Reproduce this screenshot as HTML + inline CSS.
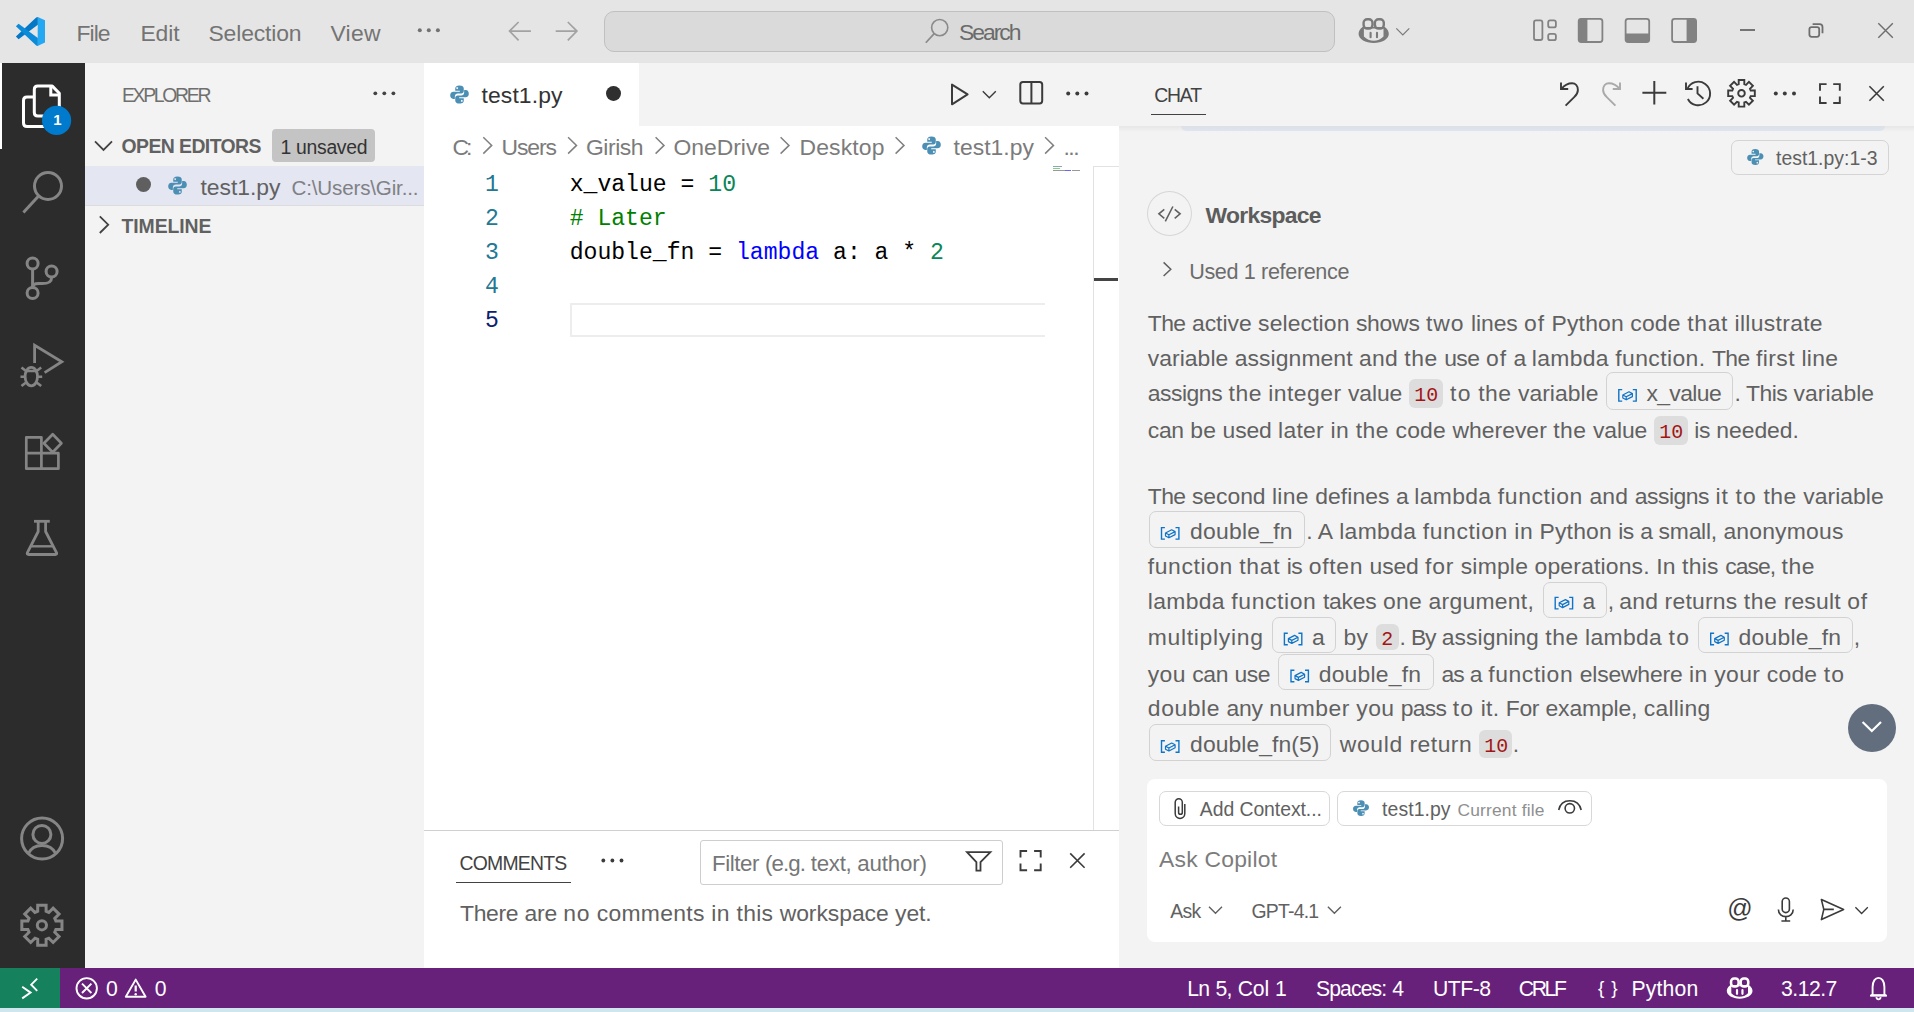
<!DOCTYPE html>
<html lang="en"><head><meta charset="utf-8"><title>test1.py - Visual Studio Code</title><style>
html,body{margin:0;padding:0;}
body{width:1914px;height:1012px;overflow:hidden;position:relative;background:#fff;font-family:"Liberation Sans",sans-serif;}
.g{position:absolute;left:0;top:0;width:0;height:0;display:block;margin:0;padding:0;}
.a{position:absolute;display:block;}
.t{white-space:pre;}
.s{font-family:"Liberation Sans",sans-serif;}
.m{font-family:"Liberation Mono",monospace;}
svg{overflow:visible;}
</style></head><body>
<div class="g" aria-label="Window backgrounds">
<div class="a " style="left:0px;top:0px;width:1914px;height:63px;background:#e5e5e5;"></div>
<div class="a " style="left:0px;top:63px;width:85px;height:905px;background:#2c2c2c;"></div>
<div class="a " style="left:85px;top:63px;width:339px;height:905px;background:#f3f3f3;"></div>
<div class="a " style="left:424px;top:63px;width:695px;height:63px;background:#f3f3f3;"></div>
<div class="a " style="left:424px;top:126px;width:695px;height:704px;background:#ffffff;"></div>
<div class="a " style="left:424px;top:830px;width:695px;height:138px;background:#ffffff;"></div>
<div class="a " style="left:424px;top:830px;width:695px;height:1px;background:#d0d0d0;"></div>
<div class="a " style="left:1119px;top:63px;width:795px;height:905px;background:#f3f3f3;"></div>
<div class="a " style="left:0px;top:968px;width:1914px;height:40px;background:#68217a;"></div>
<div class="a " style="left:0px;top:968px;width:60px;height:40px;background:#16825d;"></div>
<div class="a " style="left:0px;top:1008px;width:1914px;height:4px;background:#cfe6ee;"></div>
</div>
<header class="g" aria-label="Title bar">
<span class="a t s" style="left:76.50px;top:22px;font-size:22.9px;line-height:22.9px;color:#747474;letter-spacing:-0.964px;">File</span>
<span class="a t s" style="left:140.50px;top:22px;font-size:22.9px;line-height:22.9px;color:#747474;letter-spacing:-0.151px;">Edit</span>
<span class="a t s" style="left:208.50px;top:22px;font-size:22.9px;line-height:22.9px;color:#747474;letter-spacing:-0.146px;">Selection</span>
<span class="a t s" style="left:330.50px;top:22px;font-size:22.9px;line-height:22.9px;color:#747474;letter-spacing:0.266px;">View</span>
<div class="a " style="left:604px;top:11px;width:731px;height:40.7px;background:#dadada;border:1px solid #c0c0c0;border-radius:10px;box-sizing:border-box;"></div>
<span class="a t s" style="left:959.00px;top:21px;font-size:22.9px;line-height:22.9px;color:#6b6b6b;letter-spacing:-2.006px;">Search</span>
</header>
<nav class="g" aria-label="Activity bar">
<div class="a " style="left:0px;top:63px;width:2.2px;height:86px;background:#ffffff;"></div>
</nav>
<aside class="g" aria-label="Explorer side bar">
<span class="a t s" style="left:121.90px;top:86px;font-size:19.4px;line-height:19.4px;color:#6f6f6f;letter-spacing:-2.287px;">EXPLORER</span>
<span class="a t s" style="left:121.50px;top:137px;font-size:19.4px;line-height:19.4px;color:#616161;font-weight:700;letter-spacing:-0.562px;">OPEN EDITORS</span>
<div class="a " style="left:272px;top:129px;width:103px;height:33px;background:#c4c4c4;border-radius:4px;"></div>
<span class="a t s" style="left:280.50px;top:138px;font-size:19.4px;line-height:19.4px;color:#333333;letter-spacing:-0.311px;">1 unsaved</span>
<div class="a " style="left:85px;top:166px;width:339px;height:39px;background:#e4e6f1;"></div>
<div class="a " style="left:85px;top:205px;width:339px;height:1px;background:#dcdcdc;"></div>
<div class="a " style="left:135.5px;top:177.2px;width:15px;height:15px;background:#5f5f5f;border-radius:50%;"></div>
<span class="a t s" style="left:200.50px;top:176px;font-size:22.9px;line-height:22.9px;color:#616161;letter-spacing:-0.025px;">test1.py</span>
<span class="a t s" style="left:291.50px;top:178px;font-size:20.6px;line-height:20.6px;color:#808085;letter-spacing:-0.164px;">C:\Users\Gir...</span>
<span class="a t s" style="left:121.50px;top:217px;font-size:19.4px;line-height:19.4px;color:#616161;font-weight:700;letter-spacing:-0.071px;">TIMELINE</span>
</aside>
<main class="g" aria-label="Editor group">
<div class="a " style="left:424px;top:63px;width:215px;height:63px;background:#ffffff;"></div>
<span class="a t s" style="left:481.50px;top:84px;font-size:22.9px;line-height:22.9px;color:#333333;letter-spacing:0.118px;">test1.py</span>
<div class="a " style="left:606.4px;top:86.0px;width:14.8px;height:14.8px;background:#2f2f2f;border-radius:50%;"></div>
<span class="a t s" style="left:452.50px;top:136px;font-size:22.9px;line-height:22.9px;color:#7b7b7b;letter-spacing:-2.906px;">C:</span>
<span class="a t s" style="left:501.50px;top:136px;font-size:22.9px;line-height:22.9px;color:#7b7b7b;letter-spacing:-1.095px;">Users</span>
<span class="a t s" style="left:586.00px;top:136px;font-size:22.9px;line-height:22.9px;color:#7b7b7b;letter-spacing:-0.456px;">Girish</span>
<span class="a t s" style="left:673.50px;top:136px;font-size:22.9px;line-height:22.9px;color:#7b7b7b;letter-spacing:-0.012px;">OneDrive</span>
<span class="a t s" style="left:799.50px;top:136px;font-size:22.9px;line-height:22.9px;color:#7b7b7b;letter-spacing:0.169px;">Desktop</span>
<span class="a t s" style="left:953.50px;top:136px;font-size:22.9px;line-height:22.9px;color:#7b7b7b;letter-spacing:0.047px;">test1.py</span>
<span class="a t s" style="left:1063.50px;top:136px;font-size:22.9px;line-height:22.9px;color:#7b7b7b;letter-spacing:-1.547px;">...</span>
<span class="a t m" style="left:484.94px;top:174px;font-size:23.1px;line-height:23.1px;color:#237893">1</span>
<span class="a t m" style="left:484.94px;top:208px;font-size:23.1px;line-height:23.1px;color:#237893">2</span>
<span class="a t m" style="left:484.94px;top:242px;font-size:23.1px;line-height:23.1px;color:#237893">3</span>
<span class="a t m" style="left:484.94px;top:276px;font-size:23.1px;line-height:23.1px;color:#237893">4</span>
<span class="a t m" style="left:484.94px;top:310px;font-size:23.1px;line-height:23.1px;color:#0b216f">5</span>
<span class="a t m" style="left:569.70px;top:174px;font-size:23.1px;line-height:23.1px;color:#000">x_value = </span>
<span class="a t m" style="left:708.30px;top:174px;font-size:23.1px;line-height:23.1px;color:#098658">10</span>
<span class="a t m" style="left:569.70px;top:208px;font-size:23.1px;line-height:23.1px;color:#008000"># Later</span>
<span class="a t m" style="left:569.70px;top:242px;font-size:23.1px;line-height:23.1px;color:#000">double_fn = </span>
<span class="a t m" style="left:736.02px;top:242px;font-size:23.1px;line-height:23.1px;color:#0000ff">lambda</span>
<span class="a t m" style="left:833.04px;top:242px;font-size:23.1px;line-height:23.1px;color:#000">a: a * </span>
<span class="a t m" style="left:930.06px;top:242px;font-size:23.1px;line-height:23.1px;color:#098658">2</span>
<div class="a " style="left:569.7px;top:303px;width:475.3px;height:34.2px;border:2.7px solid #ededed;border-right:none;box-sizing:border-box;"></div>
<div class="a " style="left:1052.5px;top:166px;width:9px;height:1px;background:#8aa;"></div>
<div class="a " style="left:1052.5px;top:168px;width:7px;height:1px;background:#8c8;"></div>
<div class="a " style="left:1052.5px;top:170px;width:12px;height:1px;background:#999;"></div>
<div class="a " style="left:1065px;top:170px;width:6px;height:1px;background:#66f;"></div>
<div class="a " style="left:1072px;top:170px;width:8px;height:1px;background:#999;"></div>
<div class="a " style="left:1093px;top:166px;width:1px;height:664px;background:#e2e2e2;"></div>
<div class="a " style="left:1093px;top:166px;width:26px;height:1px;background:#e2e2e2;"></div>
<div class="a " style="left:1094px;top:278px;width:24px;height:3px;background:#444444;"></div>
</main>
<section class="g" aria-label="Panel: Comments">
<span class="a t s" style="left:459.50px;top:854px;font-size:19.4px;line-height:19.4px;color:#424242;letter-spacing:-0.773px;">COMMENTS</span>
<div class="a " style="left:456px;top:882px;width:115px;height:1px;background:#424242;"></div>
<div class="a " style="left:700px;top:840px;width:303px;height:45px;background:#ffffff;border:1px solid #cecece;border-radius:3px;box-sizing:border-box;"></div>
<span class="a t s" style="left:712.00px;top:853px;font-size:22.3px;line-height:22.3px;color:#767676;letter-spacing:-0.405px;">Filter </span>
<span class="a t s" style="left:765.05px;top:853px;font-size:22.3px;line-height:22.3px;color:#767676;letter-spacing:-0.946px;">(e.g. </span>
<span class="a t s" style="left:810.86px;top:853px;font-size:22.3px;line-height:22.3px;color:#767676;letter-spacing:-0.319px;">text, </span>
<span class="a t s" style="left:857.32px;top:853px;font-size:22.3px;line-height:22.3px;color:#767676;letter-spacing:-0.176px;">author)</span>
<span class="a t s" style="left:460.10px;top:902px;font-size:22.9px;line-height:22.9px;color:#616161;letter-spacing:-0.342px;">There </span>
<span class="a t s" style="left:524.61px;top:902px;font-size:22.9px;line-height:22.9px;color:#616161;letter-spacing:-0.267px;">are </span>
<span class="a t s" style="left:563.32px;top:902px;font-size:22.9px;line-height:22.9px;color:#616161;letter-spacing:0.732px;">no </span>
<span class="a t s" style="left:596.66px;top:902px;font-size:22.9px;line-height:22.9px;color:#616161;letter-spacing:0.317px;">comments </span>
<span class="a t s" style="left:711.21px;top:902px;font-size:22.9px;line-height:22.9px;color:#616161;letter-spacing:0.528px;">in </span>
<span class="a t s" style="left:736.50px;top:902px;font-size:22.9px;line-height:22.9px;color:#616161;letter-spacing:0.278px;">this </span>
<span class="a t s" style="left:779.65px;top:902px;font-size:22.9px;line-height:22.9px;color:#616161;letter-spacing:-0.042px;">workspace </span>
<span class="a t s" style="left:895.11px;top:902px;font-size:22.9px;line-height:22.9px;color:#616161;letter-spacing:-0.142px;">yet.</span>
</section>
<aside class="g" aria-label="Chat">
<span class="a t s" style="left:1154.30px;top:86px;font-size:19.4px;line-height:19.4px;color:#424242;letter-spacing:-1.220px;">CHAT</span>
<div class="a " style="left:1150.8px;top:113.6px;width:55.2px;height:1px;background:#424242;"></div>
<div class="a " style="left:1181px;top:126px;width:704px;height:4.8px;background:#dde6f0;border-radius:0 0 10px 10px;"></div>
<div class="a " style="left:1119px;top:126px;width:795px;height:6px;background:linear-gradient(#dcdcdc,rgba(243,243,243,0));opacity:.55;"></div>
<div class="a " style="left:1731.4px;top:140.2px;width:157.6px;height:34.6px;border:1px solid #d4d4d4;border-radius:7px;box-sizing:border-box;"></div>
<span class="a t s" style="left:1776.00px;top:149px;font-size:19.4px;line-height:19.4px;color:#616161;letter-spacing:0.016px;">test1.py:1-3</span>
<div class="a " style="left:1147px;top:190.9px;width:45px;height:45.5px;border:1px solid #d6d6d6;border-radius:50%;box-sizing:border-box;"></div>
<span class="a t s" style="left:1205.50px;top:204px;font-size:22.9px;line-height:22.9px;color:#5c5c5c;font-weight:700;letter-spacing:-0.715px;">Workspace</span>
<span class="a t s" style="left:1189.20px;top:261px;font-size:21.6px;line-height:21.6px;color:#6c6c6c;letter-spacing:-0.357px;">Used 1 reference</span>
<span class="a t s" style="left:1147.80px;top:312px;font-size:22.9px;line-height:22.9px;color:#616161;letter-spacing:-0.577px;">The </span>
<span class="a t s" style="left:1191.93px;top:312px;font-size:22.9px;line-height:22.9px;color:#616161;letter-spacing:-0.008px;">active </span>
<span class="a t s" style="left:1258.11px;top:312px;font-size:22.9px;line-height:22.9px;color:#616161;letter-spacing:0.116px;">selection </span>
<span class="a t s" style="left:1355.92px;top:312px;font-size:22.9px;line-height:22.9px;color:#616161;letter-spacing:-0.239px;">shows </span>
<span class="a t s" style="left:1426.03px;top:312px;font-size:22.9px;line-height:22.9px;color:#616161;letter-spacing:0.979px;">two </span>
<span class="a t s" style="left:1471.00px;top:312px;font-size:22.9px;line-height:22.9px;color:#616161;letter-spacing:-0.074px;">lines </span>
<span class="a t s" style="left:1524.12px;top:312px;font-size:22.9px;line-height:22.9px;color:#616161;letter-spacing:0.971px;">of </span>
<span class="a t s" style="left:1551.57px;top:312px;font-size:22.9px;line-height:22.9px;color:#616161;letter-spacing:0.169px;">Python </span>
<span class="a t s" style="left:1630.26px;top:312px;font-size:22.9px;line-height:22.9px;color:#616161;letter-spacing:0.220px;">code </span>
<span class="a t s" style="left:1687.19px;top:312px;font-size:22.9px;line-height:22.9px;color:#616161;letter-spacing:0.702px;">that </span>
<span class="a t s" style="left:1734.60px;top:312px;font-size:22.9px;line-height:22.9px;color:#616161;letter-spacing:0.304px;">illustrate</span>
<span class="a t s" style="left:1147.80px;top:347px;font-size:22.9px;line-height:22.9px;color:#616161;letter-spacing:0.041px;">variable </span>
<span class="a t s" style="left:1234.71px;top:347px;font-size:22.9px;line-height:22.9px;color:#616161;letter-spacing:0.087px;">assignment </span>
<span class="a t s" style="left:1359.06px;top:347px;font-size:22.9px;line-height:22.9px;color:#616161;letter-spacing:0.229px;">and </span>
<span class="a t s" style="left:1404.36px;top:347px;font-size:22.9px;line-height:22.9px;color:#616161;letter-spacing:0.521px;">the </span>
<span class="a t s" style="left:1444.16px;top:347px;font-size:22.9px;line-height:22.9px;color:#616161;letter-spacing:-0.514px;">use </span>
<span class="a t s" style="left:1485.95px;top:347px;font-size:22.9px;line-height:22.9px;color:#616161;letter-spacing:0.971px;">of </span>
<span class="a t s" style="left:1513.40px;top:347px;font-size:22.9px;line-height:22.9px;color:#616161;letter-spacing:-0.824px;">a </span>
<span class="a t s" style="left:1531.72px;top:347px;font-size:22.9px;line-height:22.9px;color:#616161;letter-spacing:0.345px;">lambda </span>
<span class="a t s" style="left:1615.29px;top:347px;font-size:22.9px;line-height:22.9px;color:#616161;letter-spacing:0.404px;">function. </span>
<span class="a t s" style="left:1711.88px;top:347px;font-size:22.9px;line-height:22.9px;color:#616161;letter-spacing:-0.577px;">The </span>
<span class="a t s" style="left:1756.01px;top:347px;font-size:22.9px;line-height:22.9px;color:#616161;letter-spacing:0.422px;">first </span>
<span class="a t s" style="left:1801.41px;top:347px;font-size:22.9px;line-height:22.9px;color:#616161;letter-spacing:0.286px;">line</span>
<span class="a t s" style="left:1147.80px;top:382px;font-size:22.9px;line-height:22.9px;color:#616161;letter-spacing:-0.472px;">assigns </span>
<span class="a t s" style="left:1228.53px;top:382px;font-size:22.9px;line-height:22.9px;color:#616161;letter-spacing:0.521px;">the </span>
<span class="a t s" style="left:1268.33px;top:382px;font-size:22.9px;line-height:22.9px;color:#616161;letter-spacing:0.456px;">integer </span>
<span class="a t s" style="left:1347.94px;top:382px;font-size:22.9px;line-height:22.9px;color:#616161;letter-spacing:-0.099px;">value</span>
<div class="a " style="left:1409px;top:379px;width:34px;height:28.80000000000001px;background:#dddddd;border-radius:6px;"></div>
<span class="a t m" style="left:1414.20px;top:386px;font-size:19.9px;line-height:19.9px;color:#a31515;letter-spacing:0.225px;">10</span>
<span class="a t s" style="left:1450.10px;top:382px;font-size:22.9px;line-height:22.9px;color:#616161;letter-spacing:1.276px;">to </span>
<span class="a t s" style="left:1478.16px;top:382px;font-size:22.9px;line-height:22.9px;color:#616161;letter-spacing:0.521px;">the </span>
<span class="a t s" style="left:1517.96px;top:382px;font-size:22.9px;line-height:22.9px;color:#616161;letter-spacing:0.041px;">variable</span>
<div class="a " style="left:1605.9px;top:372.4px;width:127.09999999999991px;height:37.50000000000006px;border:1px solid #d2d2d2;border-radius:7px;box-sizing:border-box;"></div>
<span class="a t s" style="left:1646.40px;top:382px;font-size:22.9px;line-height:22.9px;color:#616161;letter-spacing:-0.602px;">x_value</span>
<span class="a t s" style="left:1734.60px;top:382px;font-size:22.9px;line-height:22.9px;color:#616161;letter-spacing:-1.297px;">. </span>
<span class="a t s" style="left:1746.09px;top:382px;font-size:22.9px;line-height:22.9px;color:#616161;letter-spacing:-0.546px;">This </span>
<span class="a t s" style="left:1793.57px;top:382px;font-size:22.9px;line-height:22.9px;color:#616161;letter-spacing:0.041px;">variable</span>
<span class="a t s" style="left:1147.80px;top:419px;font-size:22.9px;line-height:22.9px;color:#616161;letter-spacing:-0.326px;">can </span>
<span class="a t s" style="left:1190.15px;top:419px;font-size:22.9px;line-height:22.9px;color:#616161;letter-spacing:0.264px;">be </span>
<span class="a t s" style="left:1222.56px;top:419px;font-size:22.9px;line-height:22.9px;color:#616161;letter-spacing:-0.125px;">used </span>
<span class="a t s" style="left:1278.11px;top:419px;font-size:22.9px;line-height:22.9px;color:#616161;letter-spacing:0.271px;">later </span>
<span class="a t s" style="left:1330.41px;top:419px;font-size:22.9px;line-height:22.9px;color:#616161;letter-spacing:0.528px;">in </span>
<span class="a t s" style="left:1355.71px;top:419px;font-size:22.9px;line-height:22.9px;color:#616161;letter-spacing:0.521px;">the </span>
<span class="a t s" style="left:1395.51px;top:419px;font-size:22.9px;line-height:22.9px;color:#616161;letter-spacing:0.220px;">code </span>
<span class="a t s" style="left:1452.44px;top:419px;font-size:22.9px;line-height:22.9px;color:#616161;letter-spacing:0.024px;">wherever </span>
<span class="a t s" style="left:1553.20px;top:419px;font-size:22.9px;line-height:22.9px;color:#616161;letter-spacing:0.521px;">the </span>
<span class="a t s" style="left:1593.01px;top:419px;font-size:22.9px;line-height:22.9px;color:#616161;letter-spacing:-0.099px;">value</span>
<div class="a " style="left:1654px;top:416px;width:33.799999999999955px;height:28.5px;background:#dddddd;border-radius:6px;"></div>
<span class="a t m" style="left:1659.20px;top:423px;font-size:19.9px;line-height:19.9px;color:#a31515;letter-spacing:0.225px;">10</span>
<span class="a t s" style="left:1694.30px;top:419px;font-size:22.9px;line-height:22.9px;color:#616161;letter-spacing:-0.473px;">is </span>
<span class="a t s" style="left:1716.30px;top:419px;font-size:22.9px;line-height:22.9px;color:#616161;letter-spacing:-0.031px;">needed.</span>
<span class="a t s" style="left:1147.80px;top:485px;font-size:22.9px;line-height:22.9px;color:#616161;letter-spacing:-0.577px;">The </span>
<span class="a t s" style="left:1191.93px;top:485px;font-size:22.9px;line-height:22.9px;color:#616161;letter-spacing:-0.027px;">second </span>
<span class="a t s" style="left:1272.01px;top:485px;font-size:22.9px;line-height:22.9px;color:#616161;letter-spacing:0.286px;">line </span>
<span class="a t s" style="left:1315.20px;top:485px;font-size:22.9px;line-height:22.9px;color:#616161;letter-spacing:0.077px;">defines </span>
<span class="a t s" style="left:1395.98px;top:485px;font-size:22.9px;line-height:22.9px;color:#616161;letter-spacing:-0.824px;">a </span>
<span class="a t s" style="left:1414.30px;top:485px;font-size:22.9px;line-height:22.9px;color:#616161;letter-spacing:0.345px;">lambda </span>
<span class="a t s" style="left:1497.86px;top:485px;font-size:22.9px;line-height:22.9px;color:#616161;letter-spacing:0.615px;">function </span>
<span class="a t s" style="left:1589.38px;top:485px;font-size:22.9px;line-height:22.9px;color:#616161;letter-spacing:0.229px;">and </span>
<span class="a t s" style="left:1634.68px;top:485px;font-size:22.9px;line-height:22.9px;color:#616161;letter-spacing:-0.472px;">assigns </span>
<span class="a t s" style="left:1715.41px;top:485px;font-size:22.9px;line-height:22.9px;color:#616161;letter-spacing:1.071px;">it </span>
<span class="a t s" style="left:1735.42px;top:485px;font-size:22.9px;line-height:22.9px;color:#616161;letter-spacing:1.276px;">to </span>
<span class="a t s" style="left:1763.48px;top:485px;font-size:22.9px;line-height:22.9px;color:#616161;letter-spacing:0.521px;">the </span>
<span class="a t s" style="left:1803.28px;top:485px;font-size:22.9px;line-height:22.9px;color:#616161;letter-spacing:0.041px;">variable</span>
<div class="a " style="left:1149.4px;top:511.0px;width:155.79999999999973px;height:36.80000000000007px;border:1px solid #d2d2d2;border-radius:7px;box-sizing:border-box;"></div>
<span class="a t s" style="left:1190.10px;top:520px;font-size:22.9px;line-height:22.9px;color:#616161;letter-spacing:0.227px;">double_fn</span>
<span class="a t s" style="left:1306.20px;top:520px;font-size:22.9px;line-height:22.9px;color:#616161;letter-spacing:-1.297px;">. </span>
<span class="a t s" style="left:1317.69px;top:520px;font-size:22.9px;line-height:22.9px;color:#616161;letter-spacing:-0.188px;">A </span>
<span class="a t s" style="left:1339.19px;top:520px;font-size:22.9px;line-height:22.9px;color:#616161;letter-spacing:0.345px;">lambda </span>
<span class="a t s" style="left:1422.76px;top:520px;font-size:22.9px;line-height:22.9px;color:#616161;letter-spacing:0.615px;">function </span>
<span class="a t s" style="left:1514.27px;top:520px;font-size:22.9px;line-height:22.9px;color:#616161;letter-spacing:0.528px;">in </span>
<span class="a t s" style="left:1539.57px;top:520px;font-size:22.9px;line-height:22.9px;color:#616161;letter-spacing:0.169px;">Python </span>
<span class="a t s" style="left:1618.26px;top:520px;font-size:22.9px;line-height:22.9px;color:#616161;letter-spacing:-0.473px;">is </span>
<span class="a t s" style="left:1640.26px;top:520px;font-size:22.9px;line-height:22.9px;color:#616161;letter-spacing:-0.824px;">a </span>
<span class="a t s" style="left:1658.58px;top:520px;font-size:22.9px;line-height:22.9px;color:#616161;letter-spacing:-0.233px;">small, </span>
<span class="a t s" style="left:1723.38px;top:520px;font-size:22.9px;line-height:22.9px;color:#616161;letter-spacing:0.202px;">anonymous</span>
<span class="a t s" style="left:1147.80px;top:555px;font-size:22.9px;line-height:22.9px;color:#616161;letter-spacing:0.615px;">function </span>
<span class="a t s" style="left:1239.32px;top:555px;font-size:22.9px;line-height:22.9px;color:#616161;letter-spacing:0.702px;">that </span>
<span class="a t s" style="left:1286.73px;top:555px;font-size:22.9px;line-height:22.9px;color:#616161;letter-spacing:-0.473px;">is </span>
<span class="a t s" style="left:1308.72px;top:555px;font-size:22.9px;line-height:22.9px;color:#616161;letter-spacing:0.701px;">often </span>
<span class="a t s" style="left:1369.56px;top:555px;font-size:22.9px;line-height:22.9px;color:#616161;letter-spacing:-0.125px;">used </span>
<span class="a t s" style="left:1425.11px;top:555px;font-size:22.9px;line-height:22.9px;color:#616161;letter-spacing:0.820px;">for </span>
<span class="a t s" style="left:1460.70px;top:555px;font-size:22.9px;line-height:22.9px;color:#616161;letter-spacing:0.206px;">simple </span>
<span class="a t s" style="left:1534.51px;top:555px;font-size:22.9px;line-height:22.9px;color:#616161;letter-spacing:0.184px;">operations. </span>
<span class="a t s" style="left:1656.21px;top:555px;font-size:22.9px;line-height:22.9px;color:#616161;letter-spacing:0.176px;">In </span>
<span class="a t s" style="left:1682.07px;top:555px;font-size:22.9px;line-height:22.9px;color:#616161;letter-spacing:0.278px;">this </span>
<span class="a t s" style="left:1725.22px;top:555px;font-size:22.9px;line-height:22.9px;color:#616161;letter-spacing:-0.952px;">case, </span>
<span class="a t s" style="left:1781.59px;top:555px;font-size:22.9px;line-height:22.9px;color:#616161;letter-spacing:0.521px;">the</span>
<span class="a t s" style="left:1147.80px;top:590px;font-size:22.9px;line-height:22.9px;color:#616161;letter-spacing:0.345px;">lambda </span>
<span class="a t s" style="left:1231.36px;top:590px;font-size:22.9px;line-height:22.9px;color:#616161;letter-spacing:0.615px;">function </span>
<span class="a t s" style="left:1322.88px;top:590px;font-size:22.9px;line-height:22.9px;color:#616161;letter-spacing:-0.217px;">takes </span>
<span class="a t s" style="left:1382.92px;top:590px;font-size:22.9px;line-height:22.9px;color:#616161;letter-spacing:0.323px;">one </span>
<span class="a t s" style="left:1428.51px;top:590px;font-size:22.9px;line-height:22.9px;color:#616161;letter-spacing:0.286px;">argument,</span>
<div class="a " style="left:1542.7px;top:582.1999999999999px;width:64.39999999999986px;height:35.90000000000009px;border:1px solid #d2d2d2;border-radius:7px;box-sizing:border-box;"></div>
<span class="a t s" style="left:1582.60px;top:590px;font-size:22.9px;line-height:22.9px;color:#616161;letter-spacing:-0.824px;">a</span>
<span class="a t s" style="left:1607.80px;top:590px;font-size:22.9px;line-height:22.9px;color:#616161;letter-spacing:-1.297px;">, </span>
<span class="a t s" style="left:1619.29px;top:590px;font-size:22.9px;line-height:22.9px;color:#616161;letter-spacing:0.229px;">and </span>
<span class="a t s" style="left:1664.59px;top:590px;font-size:22.9px;line-height:22.9px;color:#616161;letter-spacing:0.224px;">returns </span>
<span class="a t s" style="left:1743.82px;top:590px;font-size:22.9px;line-height:22.9px;color:#616161;letter-spacing:0.521px;">the </span>
<span class="a t s" style="left:1783.63px;top:590px;font-size:22.9px;line-height:22.9px;color:#616161;letter-spacing:0.189px;">result </span>
<span class="a t s" style="left:1847.16px;top:590px;font-size:22.9px;line-height:22.9px;color:#616161;letter-spacing:0.971px;">of</span>
<span class="a t s" style="left:1147.80px;top:626px;font-size:22.9px;line-height:22.9px;color:#616161;letter-spacing:0.695px;">multiplying</span>
<div class="a " style="left:1271.9px;top:616.9px;width:64.39999999999986px;height:35.80000000000007px;border:1px solid #d2d2d2;border-radius:7px;box-sizing:border-box;"></div>
<span class="a t s" style="left:1312.10px;top:626px;font-size:22.9px;line-height:22.9px;color:#616161;letter-spacing:-0.824px;">a</span>
<span class="a t s" style="left:1343.50px;top:626px;font-size:22.9px;line-height:22.9px;color:#616161;letter-spacing:0.332px;">by</span>
<div class="a " style="left:1376.3px;top:623.5px;width:22.700000000000045px;height:26.5px;background:#dddddd;border-radius:6px;"></div>
<span class="a t m" style="left:1381.20px;top:630px;font-size:19.9px;line-height:19.9px;color:#a31515;">2</span>
<span class="a t s" style="left:1399.40px;top:626px;font-size:22.9px;line-height:22.9px;color:#616161;letter-spacing:-1.297px;">. </span>
<span class="a t s" style="left:1410.89px;top:626px;font-size:22.9px;line-height:22.9px;color:#616161;letter-spacing:-1.109px;">By </span>
<span class="a t s" style="left:1441.80px;top:626px;font-size:22.9px;line-height:22.9px;color:#616161;letter-spacing:0.036px;">assigning </span>
<span class="a t s" style="left:1545.25px;top:626px;font-size:22.9px;line-height:22.9px;color:#616161;letter-spacing:0.521px;">the </span>
<span class="a t s" style="left:1585.06px;top:626px;font-size:22.9px;line-height:22.9px;color:#616161;letter-spacing:0.345px;">lambda </span>
<span class="a t s" style="left:1668.62px;top:626px;font-size:22.9px;line-height:22.9px;color:#616161;letter-spacing:1.276px;">to</span>
<div class="a " style="left:1697.7px;top:616.9px;width:155.19999999999982px;height:35.80000000000007px;border:1px solid #d2d2d2;border-radius:7px;box-sizing:border-box;"></div>
<span class="a t s" style="left:1738.60px;top:626px;font-size:22.9px;line-height:22.9px;color:#616161;letter-spacing:0.227px;">double_fn</span>
<span class="a t s" style="left:1853.80px;top:626px;font-size:22.9px;line-height:22.9px;color:#616161;letter-spacing:-1.297px;">,</span>
<span class="a t s" style="left:1147.80px;top:663px;font-size:22.9px;line-height:22.9px;color:#616161;letter-spacing:0.368px;">you </span>
<span class="a t s" style="left:1192.24px;top:663px;font-size:22.9px;line-height:22.9px;color:#616161;letter-spacing:-0.326px;">can </span>
<span class="a t s" style="left:1234.59px;top:663px;font-size:22.9px;line-height:22.9px;color:#616161;letter-spacing:-0.514px;">use</span>
<div class="a " style="left:1277.9px;top:654.0px;width:156.19999999999982px;height:35.80000000000007px;border:1px solid #d2d2d2;border-radius:7px;box-sizing:border-box;"></div>
<span class="a t s" style="left:1318.70px;top:663px;font-size:22.9px;line-height:22.9px;color:#616161;letter-spacing:0.227px;">double_fn</span>
<span class="a t s" style="left:1441.60px;top:663px;font-size:22.9px;line-height:22.9px;color:#616161;letter-spacing:-1.178px;">as </span>
<span class="a t s" style="left:1469.84px;top:663px;font-size:22.9px;line-height:22.9px;color:#616161;letter-spacing:-0.824px;">a </span>
<span class="a t s" style="left:1488.17px;top:663px;font-size:22.9px;line-height:22.9px;color:#616161;letter-spacing:0.615px;">function </span>
<span class="a t s" style="left:1579.68px;top:663px;font-size:22.9px;line-height:22.9px;color:#616161;letter-spacing:-0.169px;">elsewhere </span>
<span class="a t s" style="left:1688.91px;top:663px;font-size:22.9px;line-height:22.9px;color:#616161;letter-spacing:0.528px;">in </span>
<span class="a t s" style="left:1714.21px;top:663px;font-size:22.9px;line-height:22.9px;color:#616161;letter-spacing:0.409px;">your </span>
<span class="a t s" style="left:1766.79px;top:663px;font-size:22.9px;line-height:22.9px;color:#616161;letter-spacing:0.220px;">code </span>
<span class="a t s" style="left:1823.72px;top:663px;font-size:22.9px;line-height:22.9px;color:#616161;letter-spacing:1.276px;">to</span>
<span class="a t s" style="left:1147.80px;top:697px;font-size:22.9px;line-height:22.9px;color:#616161;letter-spacing:0.600px;">double </span>
<span class="a t s" style="left:1226.56px;top:697px;font-size:22.9px;line-height:22.9px;color:#616161;letter-spacing:-0.233px;">any </span>
<span class="a t s" style="left:1269.20px;top:697px;font-size:22.9px;line-height:22.9px;color:#616161;letter-spacing:0.517px;">number </span>
<span class="a t s" style="left:1356.34px;top:697px;font-size:22.9px;line-height:22.9px;color:#616161;letter-spacing:0.368px;">you </span>
<span class="a t s" style="left:1400.78px;top:697px;font-size:22.9px;line-height:22.9px;color:#616161;letter-spacing:-0.712px;">pass </span>
<span class="a t s" style="left:1452.70px;top:697px;font-size:22.9px;line-height:22.9px;color:#616161;letter-spacing:1.276px;">to </span>
<span class="a t s" style="left:1480.76px;top:697px;font-size:22.9px;line-height:22.9px;color:#616161;letter-spacing:0.287px;">it. </span>
<span class="a t s" style="left:1505.84px;top:697px;font-size:22.9px;line-height:22.9px;color:#616161;letter-spacing:-0.356px;">For </span>
<span class="a t s" style="left:1545.53px;top:697px;font-size:22.9px;line-height:22.9px;color:#616161;letter-spacing:-0.139px;">example, </span>
<span class="a t s" style="left:1643.72px;top:697px;font-size:22.9px;line-height:22.9px;color:#616161;letter-spacing:0.255px;">calling</span>
<div class="a " style="left:1149.4px;top:723.8px;width:181.89999999999986px;height:36.80000000000007px;border:1px solid #d2d2d2;border-radius:7px;box-sizing:border-box;"></div>
<span class="a t s" style="left:1190.10px;top:733px;font-size:22.9px;line-height:22.9px;color:#616161;letter-spacing:0.067px;">double_fn(5)</span>
<span class="a t s" style="left:1339.70px;top:733px;font-size:22.9px;line-height:22.9px;color:#616161;letter-spacing:0.692px;">would </span>
<span class="a t s" style="left:1409.39px;top:733px;font-size:22.9px;line-height:22.9px;color:#616161;letter-spacing:0.514px;">return</span>
<div class="a " style="left:1479px;top:730.4px;width:33px;height:28.0px;background:#dddddd;border-radius:6px;"></div>
<span class="a t m" style="left:1484.20px;top:737px;font-size:19.9px;line-height:19.9px;color:#a31515;letter-spacing:0.225px;">10</span>
<span class="a t s" style="left:1512.80px;top:733px;font-size:22.9px;line-height:22.9px;color:#616161;letter-spacing:-1.297px;">.</span>
<div class="a " style="left:1848px;top:704px;width:48px;height:48px;background:#626e7e;border-radius:50%;"></div>
<div class="a " style="left:1147px;top:779px;width:740px;height:163px;background:#ffffff;border-radius:8px;"></div>
<div class="a " style="left:1159px;top:791px;width:170.8px;height:34.9px;border:1px solid #d8d8d8;border-radius:7px;box-sizing:border-box;"></div>
<span class="a t s" style="left:1199.80px;top:800px;font-size:19.4px;line-height:19.4px;color:#616161;letter-spacing:-0.061px;">Add Context...</span>
<div class="a " style="left:1337px;top:791px;width:255px;height:34.9px;border:1px solid #d8d8d8;border-radius:7px;box-sizing:border-box;"></div>
<span class="a t s" style="left:1382.10px;top:800px;font-size:19.4px;line-height:19.4px;color:#616161;letter-spacing:0.071px;">test1.py</span>
<span class="a t s" style="left:1457.50px;top:802px;font-size:17.4px;line-height:17.4px;color:#8f8f8f;letter-spacing:0.176px;">Current file</span>
<span class="a t s" style="left:1159.10px;top:848px;font-size:22.9px;line-height:22.9px;color:#7c7c7c;letter-spacing:0.212px;">Ask Copilot</span>
<span class="a t s" style="left:1170.20px;top:902px;font-size:19.4px;line-height:19.4px;color:#616161;letter-spacing:-0.614px;">Ask</span>
<span class="a t s" style="left:1251.50px;top:902px;font-size:19.4px;line-height:19.4px;color:#616161;letter-spacing:-0.767px;">GPT-4.1</span>
</aside>
<footer class="g" aria-label="Status bar">
<span class="a t s" style="left:106.10px;top:978px;font-size:21.2px;line-height:21.2px;color:#ffffff;">0</span>
<span class="a t s" style="left:154.70px;top:978px;font-size:21.2px;line-height:21.2px;color:#ffffff;">0</span>
<span class="a t s" style="left:1433.00px;top:978px;font-size:21.2px;line-height:21.2px;color:#ffffff;letter-spacing:-0.483px;">UTF-8</span>
<span class="a t s" style="left:1518.80px;top:978px;font-size:21.2px;line-height:21.2px;color:#ffffff;letter-spacing:-2.409px;">CRLF</span>
<span class="a t s" style="left:1631.50px;top:978px;font-size:21.2px;line-height:21.2px;color:#ffffff;letter-spacing:0.166px;">Python</span>
<span class="a t s" style="left:1781.10px;top:978px;font-size:21.2px;line-height:21.2px;color:#ffffff;letter-spacing:-0.544px;">3.12.7</span>
<span class="a t s" style="left:1187.20px;top:978px;font-size:21.2px;line-height:21.2px;color:#ffffff;letter-spacing:-0.611px;">Ln </span>
<span class="a t s" style="left:1215.47px;top:978px;font-size:21.2px;line-height:21.2px;color:#ffffff;letter-spacing:-0.671px;">5, </span>
<span class="a t s" style="left:1237.72px;top:978px;font-size:21.2px;line-height:21.2px;color:#ffffff;letter-spacing:-0.181px;">Col </span>
<span class="a t s" style="left:1274.90px;top:978px;font-size:21.2px;line-height:21.2px;color:#ffffff;letter-spacing:-0.154px;">1</span>
<span class="a t s" style="left:1316.00px;top:978px;font-size:21.2px;line-height:21.2px;color:#ffffff;letter-spacing:-0.897px;">Spaces: </span>
<span class="a t s" style="left:1392.20px;top:978px;font-size:21.2px;line-height:21.2px;color:#ffffff;letter-spacing:-0.154px;">4</span>
<span class="a t s" style="left:1598.00px;top:978px;font-size:19px;line-height:19px;color:#ffffff;">{</span>
<span class="a t s" style="left:1611.20px;top:978px;font-size:19px;line-height:19px;color:#ffffff;">}</span>
</footer>
<div class="g" aria-label="Icons">
<svg class="a" style="left:0;top:0" width="1914" height="1012" viewBox="0 0 1914 1012"><polygon points="37.8,17 45,20.3 45,42.6 37.6,45.9" fill="#25a8f2"/><polygon points="37.8,17 37.8,24.8 18.6,39.2 15.9,36.4 36.2,17.4" fill="#0278c6"/><polygon points="15.9,26.3 18.6,23.8 37.8,37.9 37.8,45.9 36.2,45.4" fill="#0a8ad8"/><circle cx="419.8" cy="30.3" r="2" fill="#727272" stroke="none" stroke-width="0"/><circle cx="428.8" cy="30.3" r="2" fill="#727272" stroke="none" stroke-width="0"/><circle cx="437.9" cy="30.3" r="2" fill="#727272" stroke="none" stroke-width="0"/><path d="M530.9 31.1 H509.6 M518.6 22 L509.5 31.1 L518.6 40.4" fill="none" stroke="#a2a2a2" stroke-width="1.7" stroke-linecap="butt" stroke-linejoin="miter" /><path d="M555.7 31.1 H577 M567.8 22 L576.9 31.1 L567.8 40.4" fill="none" stroke="#a2a2a2" stroke-width="1.7" stroke-linecap="butt" stroke-linejoin="miter" /><circle cx="939.7" cy="27.6" r="8.1" fill="none" stroke="#8a8a8a" stroke-width="1.6"/><path d="M934.2 33.6 L925.8 42.8" fill="none" stroke="#8a8a8a" stroke-width="1.7" stroke-linecap="butt" stroke-linejoin="miter" /><g transform="translate(1358.6 17.9) scale(1.0)"><path fill="#7a7a7a" fill-rule="evenodd" d="M3.9 9.1 C0.9 11.6 0 13.6 0 16.1 C0 21.1 6.9 25.1 15.1 25.1 C23.3 25.1 30.2 21.1 30.2 16.1 C30.2 13.6 29.3 11.6 26.3 9.1 Z M5.3 10.5 V18.6 C7.8 21.4 11.7 22.8 15.1 22.8 C18.5 22.8 22.4 21.4 24.9 18.6 V10.5 Z"/><rect x="5" y="1.3" width="8.9" height="9.4" rx="3.6" fill="none" stroke="#7a7a7a" stroke-width="2.4"/><rect x="16.3" y="1.3" width="8.9" height="9.4" rx="3.6" fill="none" stroke="#7a7a7a" stroke-width="2.4"/><path d="M12 15 V19.3 M18.4 15 V19.3" fill="none" stroke="#7a7a7a" stroke-width="2.1" stroke-linecap="round"/></g><path d="M1396.3 28.4 L1402.8 34.9 L1409.3 28.4" fill="none" stroke="#7a7a7a" stroke-width="1.2" stroke-linecap="butt" stroke-linejoin="miter" /><rect x="1534" y="20.4" width="8.4" height="19.6" rx="2" fill="none" stroke="#828282" stroke-width="1.8"/><rect x="1548.2" y="20.4" width="7.7" height="7" rx="2" fill="none" stroke="#828282" stroke-width="1.8"/><rect x="1548.2" y="33.8" width="7.7" height="6.4" rx="2" fill="none" stroke="#828282" stroke-width="1.8"/><rect x="1578.7" y="18.8" width="23.7" height="23.2" rx="2.5" fill="none" stroke="#828282" stroke-width="1.8"/><path d="M1581 18.8 H1587.4 V42 H1581 Q1578.7 42 1578.7 39.7 V21.1 Q1578.7 18.8 1581 18.8Z" fill="#828282"/><rect x="1625.6" y="18.8" width="23.6" height="23.2" rx="2.5" fill="none" stroke="#828282" stroke-width="1.8"/><path d="M1625.6 33.4 H1649.2 V39.7 Q1649.2 42 1646.9 42 H1627.9 Q1625.6 42 1625.6 39.7Z" fill="#828282"/><rect x="1672.1" y="18.8" width="24" height="23.2" rx="2.5" fill="none" stroke="#828282" stroke-width="1.8"/><path d="M1686.6 18.8 H1693.8 Q1696.1 18.8 1696.1 21.1 V39.7 Q1696.1 42 1693.8 42 H1686.6Z" fill="#828282"/><path d="M1740 30 H1755" fill="none" stroke="#6e6e6e" stroke-width="1.9" stroke-linecap="butt" stroke-linejoin="miter" /><rect x="1809.4" y="27.1" width="9.8" height="9.7" rx="2.2" fill="none" stroke="#6e6e6e" stroke-width="1.8"/><path d="M1812.6 24.2 H1819.6 Q1822.5 24.2 1822.5 27.1 V33.2" fill="none" stroke="#6e6e6e" stroke-width="1.8" stroke-linecap="butt" stroke-linejoin="miter" /><path d="M1878.3 23.3 L1892.8 37.7 M1892.8 23.3 L1878.3 37.7" fill="none" stroke="#6e6e6e" stroke-width="1.4" stroke-linecap="butt" stroke-linejoin="miter" /><path d="M52.3 86.1 H37.8 Q34.3 86.1 34.3 89.6 V112.6 Q34.3 116.1 37.8 116.1 H55.8 Q59.3 116.1 59.3 112.6 V93.3 Z" fill="none" stroke="#ffffff" stroke-width="3" stroke-linecap="butt" stroke-linejoin="round" /><path d="M50.8 86.5 V94.9 H59" fill="none" stroke="#ffffff" stroke-width="3" stroke-linecap="butt" stroke-linejoin="miter" /><path d="M34 97.1 H27 Q23.5 97.1 23.5 100.6 V123 Q23.5 126.5 27 126.5 H46" fill="none" stroke="#ffffff" stroke-width="3" stroke-linecap="butt" stroke-linejoin="miter" /><circle cx="56.6" cy="120.4" r="14.6" fill="#007acc" stroke="none" stroke-width="0"/><circle cx="48" cy="186" r="13.5" fill="none" stroke="#858585" stroke-width="3"/><path d="M38.6 196 L23.4 212.6" fill="none" stroke="#858585" stroke-width="3" stroke-linecap="butt" stroke-linejoin="miter" /><circle cx="32.6" cy="263.5" r="5.5" fill="none" stroke="#858585" stroke-width="3"/><circle cx="51.6" cy="271.5" r="5.5" fill="none" stroke="#858585" stroke-width="3"/><circle cx="32.6" cy="293" r="5.5" fill="none" stroke="#858585" stroke-width="3"/><path d="M32.6 269.5 V287" fill="none" stroke="#858585" stroke-width="3" stroke-linecap="butt" stroke-linejoin="miter" /><path d="M51.6 277.5 C51.6 283.5 46 283.6 42 283.6 H38.5 C35 283.6 32.8 285 32.8 287.3" fill="none" stroke="#858585" stroke-width="3" stroke-linecap="butt" stroke-linejoin="miter" /><path d="M34.6 363 V345.2 L61.8 361.8 L44.6 372.6" fill="none" stroke="#858585" stroke-width="2.8" stroke-linecap="butt" stroke-linejoin="miter" /><ellipse cx="31.3" cy="376.6" rx="6.2" ry="9.2" fill="none" stroke="#858585" stroke-width="2.8"/><path d="M20.5 376.8 H25 M37.6 376.8 H42.2 M21.5 367.5 L26 371 M41.2 367.5 L36.6 371 M21.5 386 L26 382.4 M41.2 386 L36.6 382.4 M26 371 H36.6" fill="none" stroke="#858585" stroke-width="2.6" stroke-linecap="butt" stroke-linejoin="miter" /><path d="M26.3 437.3 H41.4 V453.2 H26.3 Z M26.3 453.2 V468.7 H41.4 V453.2 M41.4 468.7 H58.4 V453.2 H41.4" fill="none" stroke="#858585" stroke-width="2.7" stroke-linecap="butt" stroke-linejoin="round" /><path d="M52.7 434.3 L61.4 443.3 L52.7 452.2 L43.9 443.3 Z" fill="none" stroke="#858585" stroke-width="2.7" stroke-linecap="butt" stroke-linejoin="round" /><path d="M34 521.3 H49.8" fill="none" stroke="#858585" stroke-width="2.8" stroke-linecap="butt" stroke-linejoin="miter" /><path d="M38.2 521.3 V531.5 L27.4 552.6 Q26.6 554.5 28.6 554.5 H55.3 Q57.3 554.5 56.5 552.6 L45.6 531.5 V521.3" fill="none" stroke="#858585" stroke-width="2.8" stroke-linecap="butt" stroke-linejoin="round" /><path d="M31.3 546.3 H52.6" fill="none" stroke="#858585" stroke-width="2.4" stroke-linecap="butt" stroke-linejoin="miter" /><circle cx="42.1" cy="838.5" r="20.5" fill="none" stroke="#858585" stroke-width="3"/><circle cx="41.9" cy="834.4" r="9" fill="none" stroke="#858585" stroke-width="3"/><path d="M28.3 853.6 C31 847.8 36 845.4 42 845.4 C48 845.4 53 847.8 55.8 853.6" fill="none" stroke="#858585" stroke-width="3" stroke-linecap="butt" stroke-linejoin="miter" /><path d="M55.88 921.10 L61.97 921.10 L61.97 929.50 L55.88 929.50 L54.76 932.22 L59.06 936.52 L53.12 942.46 L48.82 938.16 L46.10 939.28 L46.10 945.37 L37.70 945.37 L37.70 939.28 L34.98 938.16 L30.68 942.46 L24.74 936.52 L29.04 932.22 L27.92 929.50 L21.83 929.50 L21.83 921.10 L27.92 921.10 L29.04 918.38 L24.74 914.08 L30.68 908.14 L34.98 912.44 L37.70 911.32 L37.70 905.23 L46.10 905.23 L46.10 911.32 L48.82 912.44 L53.12 908.14 L59.06 914.08 L54.76 918.38Z" fill="none" stroke="#858585" stroke-width="3" stroke-linecap="butt" stroke-linejoin="miter" /><circle cx="41.9" cy="925.3" r="4.6" fill="none" stroke="#858585" stroke-width="3"/><path d="M22.2 986.8 L30.6 992.6 L22.2 998.4" fill="none" stroke="#ffffff" stroke-width="1.9" stroke-linecap="butt" stroke-linejoin="miter" /><path d="M37.2 978.6 L31.2 984.7 L37.2 990.8" fill="none" stroke="#ffffff" stroke-width="1.9" stroke-linecap="butt" stroke-linejoin="miter" /><circle cx="86.7" cy="988.3" r="10.2" fill="none" stroke="#ffffff" stroke-width="1.9"/><path d="M82 983.6 L91.4 993 M91.4 983.6 L82 993" fill="none" stroke="#ffffff" stroke-width="1.9" stroke-linecap="butt" stroke-linejoin="miter" /><path d="M135.7 979.6 L145.6 996.8 H125.8 Z" fill="none" stroke="#ffffff" stroke-width="1.9" stroke-linecap="butt" stroke-linejoin="round" /><path d="M135.7 985.5 V991.5" fill="none" stroke="#ffffff" stroke-width="2.2" stroke-linecap="butt" stroke-linejoin="miter" /><circle cx="135.7" cy="994.2" r="1.2" fill="#ffffff" stroke="none" stroke-width="0"/><g transform="translate(1726.8 977.4) scale(0.851)"><path fill="#ffffff" fill-rule="evenodd" d="M3.9 9.1 C0.9 11.6 0 13.6 0 16.1 C0 21.1 6.9 25.1 15.1 25.1 C23.3 25.1 30.2 21.1 30.2 16.1 C30.2 13.6 29.3 11.6 26.3 9.1 Z M5.3 10.5 V18.6 C7.8 21.4 11.7 22.8 15.1 22.8 C18.5 22.8 22.4 21.4 24.9 18.6 V10.5 Z"/><rect x="5" y="1.3" width="8.9" height="9.4" rx="3.6" fill="none" stroke="#ffffff" stroke-width="3.0"/><rect x="16.3" y="1.3" width="8.9" height="9.4" rx="3.6" fill="none" stroke="#ffffff" stroke-width="3.0"/><path d="M12 15 V19.3 M18.4 15 V19.3" fill="none" stroke="#ffffff" stroke-width="2.6" stroke-linecap="round"/></g><path d="M1871 995.2 H1886 M1872.6 995 V987 C1872.6 974.8 1884.4 974.8 1884.4 987 V995" fill="none" stroke="#ffffff" stroke-width="1.9" stroke-linecap="butt" stroke-linejoin="round" /><path d="M1870 995.6 H1887" fill="none" stroke="#ffffff" stroke-width="1.9" stroke-linecap="butt" stroke-linejoin="miter" /><path d="M1876.3 997.2 C1876.8 1000.2 1880.2 1000.2 1880.7 997.2" fill="none" stroke="#ffffff" stroke-width="1.8" stroke-linecap="butt" stroke-linejoin="miter" /><circle cx="375.3" cy="93.3" r="1.9" fill="#424242" stroke="none" stroke-width="0"/><circle cx="384.3" cy="93.3" r="1.9" fill="#424242" stroke="none" stroke-width="0"/><circle cx="393.4" cy="93.3" r="1.9" fill="#424242" stroke="none" stroke-width="0"/><path d="M95 141.4 L103.5 150 L112 141.4" fill="none" stroke="#424242" stroke-width="1.8" stroke-linecap="butt" stroke-linejoin="miter" /><path d="M99.8 216.4 L108.2 224.7 L99.8 233" fill="none" stroke="#424242" stroke-width="1.8" stroke-linecap="butt" stroke-linejoin="miter" /><g transform="translate(167.8 175.8) scale(0.97)" fill="#4b8fb5" fill-rule="evenodd"><path d="M10 0.6 C6.6 0.6 5.6 2 5.6 3.8 V6.2 H10.3 V7.2 H3.8 C1.6 7.2 0.4 8.8 0.4 10.9 C0.4 13 1.6 14.6 3.6 14.6 H5.2 V12 C5.2 10.2 6.5 8.9 8.3 8.9 H11.9 C13.4 8.9 14.4 7.9 14.4 6.4 V3.8 C14.4 1.8 12.9 0.6 10 0.6 Z M7.6 2.4 A0.95 0.95 0 1 1 7.59 2.4 Z"/><path transform="rotate(180 10 10)" d="M10 0.6 C6.6 0.6 5.6 2 5.6 3.8 V6.2 H10.3 V7.2 H3.8 C1.6 7.2 0.4 8.8 0.4 10.9 C0.4 13 1.6 14.6 3.6 14.6 H5.2 V12 C5.2 10.2 6.5 8.9 8.3 8.9 H11.9 C13.4 8.9 14.4 7.9 14.4 6.4 V3.8 C14.4 1.8 12.9 0.6 10 0.6 Z M7.6 2.4 A0.95 0.95 0 1 1 7.59 2.4 Z"/></g><g transform="translate(449.8 84.8) scale(0.97)" fill="#4b8fb5" fill-rule="evenodd"><path d="M10 0.6 C6.6 0.6 5.6 2 5.6 3.8 V6.2 H10.3 V7.2 H3.8 C1.6 7.2 0.4 8.8 0.4 10.9 C0.4 13 1.6 14.6 3.6 14.6 H5.2 V12 C5.2 10.2 6.5 8.9 8.3 8.9 H11.9 C13.4 8.9 14.4 7.9 14.4 6.4 V3.8 C14.4 1.8 12.9 0.6 10 0.6 Z M7.6 2.4 A0.95 0.95 0 1 1 7.59 2.4 Z"/><path transform="rotate(180 10 10)" d="M10 0.6 C6.6 0.6 5.6 2 5.6 3.8 V6.2 H10.3 V7.2 H3.8 C1.6 7.2 0.4 8.8 0.4 10.9 C0.4 13 1.6 14.6 3.6 14.6 H5.2 V12 C5.2 10.2 6.5 8.9 8.3 8.9 H11.9 C13.4 8.9 14.4 7.9 14.4 6.4 V3.8 C14.4 1.8 12.9 0.6 10 0.6 Z M7.6 2.4 A0.95 0.95 0 1 1 7.59 2.4 Z"/></g><g transform="translate(921.8 135.8) scale(0.97)" fill="#4b8fb5" fill-rule="evenodd"><path d="M10 0.6 C6.6 0.6 5.6 2 5.6 3.8 V6.2 H10.3 V7.2 H3.8 C1.6 7.2 0.4 8.8 0.4 10.9 C0.4 13 1.6 14.6 3.6 14.6 H5.2 V12 C5.2 10.2 6.5 8.9 8.3 8.9 H11.9 C13.4 8.9 14.4 7.9 14.4 6.4 V3.8 C14.4 1.8 12.9 0.6 10 0.6 Z M7.6 2.4 A0.95 0.95 0 1 1 7.59 2.4 Z"/><path transform="rotate(180 10 10)" d="M10 0.6 C6.6 0.6 5.6 2 5.6 3.8 V6.2 H10.3 V7.2 H3.8 C1.6 7.2 0.4 8.8 0.4 10.9 C0.4 13 1.6 14.6 3.6 14.6 H5.2 V12 C5.2 10.2 6.5 8.9 8.3 8.9 H11.9 C13.4 8.9 14.4 7.9 14.4 6.4 V3.8 C14.4 1.8 12.9 0.6 10 0.6 Z M7.6 2.4 A0.95 0.95 0 1 1 7.59 2.4 Z"/></g><g transform="translate(1746.8 148.6) scale(0.85)" fill="#4b8fb5" fill-rule="evenodd"><path d="M10 0.6 C6.6 0.6 5.6 2 5.6 3.8 V6.2 H10.3 V7.2 H3.8 C1.6 7.2 0.4 8.8 0.4 10.9 C0.4 13 1.6 14.6 3.6 14.6 H5.2 V12 C5.2 10.2 6.5 8.9 8.3 8.9 H11.9 C13.4 8.9 14.4 7.9 14.4 6.4 V3.8 C14.4 1.8 12.9 0.6 10 0.6 Z M7.6 2.4 A0.95 0.95 0 1 1 7.59 2.4 Z"/><path transform="rotate(180 10 10)" d="M10 0.6 C6.6 0.6 5.6 2 5.6 3.8 V6.2 H10.3 V7.2 H3.8 C1.6 7.2 0.4 8.8 0.4 10.9 C0.4 13 1.6 14.6 3.6 14.6 H5.2 V12 C5.2 10.2 6.5 8.9 8.3 8.9 H11.9 C13.4 8.9 14.4 7.9 14.4 6.4 V3.8 C14.4 1.8 12.9 0.6 10 0.6 Z M7.6 2.4 A0.95 0.95 0 1 1 7.59 2.4 Z"/></g><g transform="translate(1352.7 799.8) scale(0.8300000000000001)" fill="#4b8fb5" fill-rule="evenodd"><path d="M10 0.6 C6.6 0.6 5.6 2 5.6 3.8 V6.2 H10.3 V7.2 H3.8 C1.6 7.2 0.4 8.8 0.4 10.9 C0.4 13 1.6 14.6 3.6 14.6 H5.2 V12 C5.2 10.2 6.5 8.9 8.3 8.9 H11.9 C13.4 8.9 14.4 7.9 14.4 6.4 V3.8 C14.4 1.8 12.9 0.6 10 0.6 Z M7.6 2.4 A0.95 0.95 0 1 1 7.59 2.4 Z"/><path transform="rotate(180 10 10)" d="M10 0.6 C6.6 0.6 5.6 2 5.6 3.8 V6.2 H10.3 V7.2 H3.8 C1.6 7.2 0.4 8.8 0.4 10.9 C0.4 13 1.6 14.6 3.6 14.6 H5.2 V12 C5.2 10.2 6.5 8.9 8.3 8.9 H11.9 C13.4 8.9 14.4 7.9 14.4 6.4 V3.8 C14.4 1.8 12.9 0.6 10 0.6 Z M7.6 2.4 A0.95 0.95 0 1 1 7.59 2.4 Z"/></g><path d="M483.3 137.2 L491.7 145.4 L483.3 153.6" fill="none" stroke="#808080" stroke-width="1.5" stroke-linecap="butt" stroke-linejoin="miter" /><path d="M568.1 137.2 L576.5 145.4 L568.1 153.6" fill="none" stroke="#808080" stroke-width="1.5" stroke-linecap="butt" stroke-linejoin="miter" /><path d="M655.6 137.2 L664 145.4 L655.6 153.6" fill="none" stroke="#808080" stroke-width="1.5" stroke-linecap="butt" stroke-linejoin="miter" /><path d="M780.6 137.2 L789 145.4 L780.6 153.6" fill="none" stroke="#808080" stroke-width="1.5" stroke-linecap="butt" stroke-linejoin="miter" /><path d="M895.6 137.2 L904 145.4 L895.6 153.6" fill="none" stroke="#808080" stroke-width="1.5" stroke-linecap="butt" stroke-linejoin="miter" /><path d="M1045.1 137.2 L1053.5 145.4 L1045.1 153.6" fill="none" stroke="#808080" stroke-width="1.5" stroke-linecap="butt" stroke-linejoin="miter" /><path d="M952 84.6 V104.3 L967.6 94.4 Z" fill="none" stroke="#3b3b3b" stroke-width="2" stroke-linecap="butt" stroke-linejoin="round" /><path d="M982.8 91.3 L989.3 97.8 L995.8 91.3" fill="none" stroke="#3b3b3b" stroke-width="1.4" stroke-linecap="butt" stroke-linejoin="miter" /><rect x="1020.3" y="81.9" width="21.9" height="21.5" rx="2.6" fill="none" stroke="#3b3b3b" stroke-width="2"/><path d="M1031.4 82 V103.4" fill="none" stroke="#3b3b3b" stroke-width="2" stroke-linecap="butt" stroke-linejoin="miter" /><circle cx="1068.2" cy="93.5" r="2" fill="#3b3b3b" stroke="none" stroke-width="0"/><circle cx="1077.3" cy="93.5" r="2" fill="#3b3b3b" stroke="none" stroke-width="0"/><circle cx="1086.5" cy="93.5" r="2" fill="#3b3b3b" stroke="none" stroke-width="0"/><path d="M1561 82.6 V89 H1568.2" fill="none" stroke="#3b3b3b" stroke-width="1.9" stroke-linecap="butt" stroke-linejoin="miter" /><path d="M1561.6 88.6 C1565 84.6 1568.6 83.2 1572 83.2 C1575.6 83.2 1577.9 86.2 1577.9 90 C1577.9 93 1576.4 95 1574.2 97.2 L1565.6 105.6" fill="none" stroke="#3b3b3b" stroke-width="1.9" stroke-linecap="butt" stroke-linejoin="miter" /><path d="M1620 82.6 V89 H1612.8" fill="none" stroke="#a9a9a9" stroke-width="1.9" stroke-linecap="butt" stroke-linejoin="miter" /><path d="M1619.4 88.6 C1616 84.6 1612.4 83.2 1609 83.2 C1605.4 83.2 1603.1 86.2 1603.1 90 C1603.1 93 1604.6 95 1606.8 97.2 L1615.4 105.6" fill="none" stroke="#a9a9a9" stroke-width="1.9" stroke-linecap="butt" stroke-linejoin="miter" /><path d="M1654.3 80.9 V104.4 M1642.4 92.7 H1666.3" fill="none" stroke="#3b3b3b" stroke-width="2" stroke-linecap="butt" stroke-linejoin="miter" /><path d="M1686 82.6 V89 H1692.6" fill="none" stroke="#3b3b3b" stroke-width="1.9" stroke-linecap="butt" stroke-linejoin="miter" /><path d="M1687.39 89.00 A11.8 11.8 0 1 1 1687.85 98.98" fill="none" stroke="#3b3b3b" stroke-width="1.9" stroke-linecap="butt" stroke-linejoin="miter" /><path d="M1697.5 86.3 V93.4 L1703.4 98.7" fill="none" stroke="#3b3b3b" stroke-width="1.9" stroke-linecap="butt" stroke-linejoin="miter" /><path d="M1750.68 90.50 L1754.81 90.50 L1754.81 96.10 L1750.68 96.10 L1749.97 97.81 L1752.89 100.73 L1748.93 104.69 L1746.01 101.77 L1744.30 102.48 L1744.30 106.61 L1738.70 106.61 L1738.70 102.48 L1736.99 101.77 L1734.07 104.69 L1730.11 100.73 L1733.03 97.81 L1732.32 96.10 L1728.19 96.10 L1728.19 90.50 L1732.32 90.50 L1733.03 88.79 L1730.11 85.87 L1734.07 81.91 L1736.99 84.83 L1738.70 84.12 L1738.70 79.99 L1744.30 79.99 L1744.30 84.12 L1746.01 84.83 L1748.93 81.91 L1752.89 85.87 L1749.97 88.79Z" fill="none" stroke="#3b3b3b" stroke-width="1.9" stroke-linecap="butt" stroke-linejoin="miter" /><circle cx="1741.5" cy="93.3" r="3.3" fill="none" stroke="#3b3b3b" stroke-width="1.9"/><circle cx="1775.8" cy="93.5" r="2" fill="#3b3b3b" stroke="none" stroke-width="0"/><circle cx="1784.8" cy="93.5" r="2" fill="#3b3b3b" stroke="none" stroke-width="0"/><circle cx="1794" cy="93.5" r="2" fill="#3b3b3b" stroke="none" stroke-width="0"/><path d="M1820 90.69999999999999 V84.1 H1826.6 M1833.2 84.1 H1839.8 V90.69999999999999 M1839.8 96.4 V103 H1833.2 M1826.6 103 H1820 V96.4" fill="none" stroke="#3b3b3b" stroke-width="1.9" stroke-linecap="butt" stroke-linejoin="miter" /><path d="M1869.4 86.3 L1883.8 100.7 M1883.8 86.3 L1869.4 100.7" fill="none" stroke="#3b3b3b" stroke-width="1.6" stroke-linecap="butt" stroke-linejoin="miter" /><path d="M1164.3 209.3 L1158.9 213.8 L1164.3 218.4 M1172.9 206.5 L1165.3 221.4 M1174.7 209.3 L1180.1 213.8 L1174.7 218.4" fill="none" stroke="#616161" stroke-width="1.6" stroke-linecap="butt" stroke-linejoin="miter" /><path d="M1163.6 262.4 L1170.8 269.2 L1163.6 276" fill="none" stroke="#616161" stroke-width="1.5" stroke-linecap="butt" stroke-linejoin="miter" /><path d="M1622.2 389.6 H1618.8 V401.1 H1622.2 M1632.8 389.6 H1636.2 V401.1 H1632.8" fill="none" stroke="#0f74c8" stroke-width="1.4" stroke-linecap="butt" stroke-linejoin="miter" /><path d="M1622.8 395.0 L1629.0 391.8 L1632.4 393.6 L1632.4 396.6 L1626.2 399.8 L1622.8 398.0 Z M1622.8 395.0 L1626.2 396.8 L1632.4 393.6 M1626.2 396.8 V399.8" fill="none" stroke="#0f74c8" stroke-width="1.2" stroke-linecap="butt" stroke-linejoin="round" /><path d="M1164.9 527.6 H1161.5 V539.1 H1164.9 M1175.5 527.6 H1178.9 V539.1 H1175.5" fill="none" stroke="#0f74c8" stroke-width="1.4" stroke-linecap="butt" stroke-linejoin="miter" /><path d="M1165.5 533.0 L1171.7 529.8000000000001 L1175.1000000000001 531.6 L1175.1000000000001 534.6 L1168.9 537.8000000000001 L1165.5 536.0 Z M1165.5 533.0 L1168.9 534.8000000000001 L1175.1000000000001 531.6 M1168.9 534.8000000000001 V537.8000000000001" fill="none" stroke="#0f74c8" stroke-width="1.2" stroke-linecap="butt" stroke-linejoin="round" /><path d="M1558.6 597.4 H1555.1999999999998 V608.9 H1558.6 M1569.1999999999998 597.4 H1572.6 V608.9 H1569.1999999999998" fill="none" stroke="#0f74c8" stroke-width="1.4" stroke-linecap="butt" stroke-linejoin="miter" /><path d="M1559.1999999999998 602.8 L1565.3999999999999 599.6 L1568.8 601.4 L1568.8 604.4 L1562.6 607.6 L1559.1999999999998 605.8 Z M1559.1999999999998 602.8 L1562.6 604.6 L1568.8 601.4 M1562.6 604.6 V607.6" fill="none" stroke="#0f74c8" stroke-width="1.2" stroke-linecap="butt" stroke-linejoin="round" /><path d="M1287.8 633.2 H1284.3999999999999 V644.7 H1287.8 M1298.3999999999999 633.2 H1301.8 V644.7 H1298.3999999999999" fill="none" stroke="#0f74c8" stroke-width="1.4" stroke-linecap="butt" stroke-linejoin="miter" /><path d="M1288.3999999999999 638.6 L1294.6 635.4000000000001 L1298.0 637.2 L1298.0 640.2 L1291.8 643.4000000000001 L1288.3999999999999 641.6 Z M1288.3999999999999 638.6 L1291.8 640.4000000000001 L1298.0 637.2 M1291.8 640.4000000000001 V643.4000000000001" fill="none" stroke="#0f74c8" stroke-width="1.2" stroke-linecap="butt" stroke-linejoin="round" /><path d="M1714.1 633.2 H1710.6999999999998 V644.7 H1714.1 M1724.6999999999998 633.2 H1728.1 V644.7 H1724.6999999999998" fill="none" stroke="#0f74c8" stroke-width="1.4" stroke-linecap="butt" stroke-linejoin="miter" /><path d="M1714.6999999999998 638.6 L1720.8999999999999 635.4000000000001 L1724.3 637.2 L1724.3 640.2 L1718.1 643.4000000000001 L1714.6999999999998 641.6 Z M1714.6999999999998 638.6 L1718.1 640.4000000000001 L1724.3 637.2 M1718.1 640.4000000000001 V643.4000000000001" fill="none" stroke="#0f74c8" stroke-width="1.2" stroke-linecap="butt" stroke-linejoin="round" /><path d="M1294.4 670.2 H1291.0 V681.7 H1294.4 M1305.0 670.2 H1308.4 V681.7 H1305.0" fill="none" stroke="#0f74c8" stroke-width="1.4" stroke-linecap="butt" stroke-linejoin="miter" /><path d="M1295.0 675.6 L1301.2 672.4000000000001 L1304.6000000000001 674.2 L1304.6000000000001 677.2 L1298.4 680.4000000000001 L1295.0 678.6 Z M1295.0 675.6 L1298.4 677.4000000000001 L1304.6000000000001 674.2 M1298.4 677.4000000000001 V680.4000000000001" fill="none" stroke="#0f74c8" stroke-width="1.2" stroke-linecap="butt" stroke-linejoin="round" /><path d="M1164.9 740.8 H1161.5 V752.3 H1164.9 M1175.5 740.8 H1178.9 V752.3 H1175.5" fill="none" stroke="#0f74c8" stroke-width="1.4" stroke-linecap="butt" stroke-linejoin="miter" /><path d="M1165.5 746.1999999999999 L1171.7 743.0 L1175.1000000000001 744.8 L1175.1000000000001 747.8 L1168.9 751.0 L1165.5 749.1999999999999 Z M1165.5 746.1999999999999 L1168.9 748.0 L1175.1000000000001 744.8 M1168.9 748.0 V751.0" fill="none" stroke="#0f74c8" stroke-width="1.2" stroke-linecap="butt" stroke-linejoin="round" /><path d="M1862.6 722 L1871.8 731 L1881 722" fill="none" stroke="#ffffff" stroke-width="2.2" stroke-linecap="butt" stroke-linejoin="miter" /><path d="M1184.8 804 V813.6 A4.8 4.8 0 0 1 1175.2 813.6 V802.2 A3.55 3.55 0 0 1 1182.3 802.2 V812.4 A1.85 1.85 0 0 1 1178.6 812.4 V806.6" fill="none" stroke="#3b3b3b" stroke-width="1.5" stroke-linecap="butt" stroke-linejoin="miter" /><path d="M1558.7 810 C1560 803.6 1564.6 800.7 1569.9 800.7 C1575.2 800.7 1579.8 803.6 1581.2 810" fill="none" stroke="#3b3b3b" stroke-width="1.6" stroke-linecap="butt" stroke-linejoin="miter" /><circle cx="1569.8" cy="808.3" r="4.7" fill="none" stroke="#3b3b3b" stroke-width="1.6"/><path d="M1209 906.8 L1215.5 913.3 L1222 906.8" fill="none" stroke="#616161" stroke-width="1.4" stroke-linecap="butt" stroke-linejoin="miter" /><path d="M1327.9 906.8 L1334.4 913.3 L1340.9 906.8" fill="none" stroke="#616161" stroke-width="1.4" stroke-linecap="butt" stroke-linejoin="miter" /><rect x="1782.2" y="898" width="7.2" height="14.6" rx="3.6" fill="none" stroke="#3b3b3b" stroke-width="1.6"/><path d="M1778.4 909.4 C1778.4 919 1793.2 919 1793.2 909.4 M1785.8 916.6 V921 M1781.4 921 H1790.2" fill="none" stroke="#3b3b3b" stroke-width="1.6" stroke-linecap="butt" stroke-linejoin="miter" /><path d="M1821.4 899.6 L1843.6 909.4 L1821.4 919.6 L1823.8 909.4 Z M1823.8 909.4 H1833.8" fill="none" stroke="#3b3b3b" stroke-width="1.6" stroke-linecap="butt" stroke-linejoin="round" /><path d="M1855.4 907.3 L1861.6 913.5 L1867.8 907.3" fill="none" stroke="#3b3b3b" stroke-width="1.3" stroke-linecap="butt" stroke-linejoin="miter" /><circle cx="603.3" cy="860.5" r="1.9" fill="#3b3b3b" stroke="none" stroke-width="0"/><circle cx="612.4" cy="860.5" r="1.9" fill="#3b3b3b" stroke="none" stroke-width="0"/><circle cx="621.5" cy="860.5" r="1.9" fill="#3b3b3b" stroke="none" stroke-width="0"/><path d="M967 852.1 H990.4 L980.5 862.2 V870.6 H976.4 V862.2 Z" fill="none" stroke="#3b3b3b" stroke-width="1.8" stroke-linecap="butt" stroke-linejoin="miter" /><path d="M1020.5 857.6 V851 H1027.1 M1034.1000000000001 851 H1040.7 V857.6 M1040.7 863.6 V870.2 H1034.1000000000001 M1027.1 870.2 H1020.5 V863.6" fill="none" stroke="#3b3b3b" stroke-width="1.9" stroke-linecap="butt" stroke-linejoin="miter" /><path d="M1070.2 853.4 L1084.6 867.8 M1084.6 853.4 L1070.2 867.8" fill="none" stroke="#3b3b3b" stroke-width="1.6" stroke-linecap="butt" stroke-linejoin="miter" /></svg>
<span class="a t s" style="left:53.20px;top:112px;font-size:15px;line-height:15px;color:#ffffff;font-weight:700;">1</span>
<span class="a t s" style="left:1727.30px;top:896px;font-size:25px;line-height:25px;color:#3b3b3b;">@</span>
</div>
</body></html>
